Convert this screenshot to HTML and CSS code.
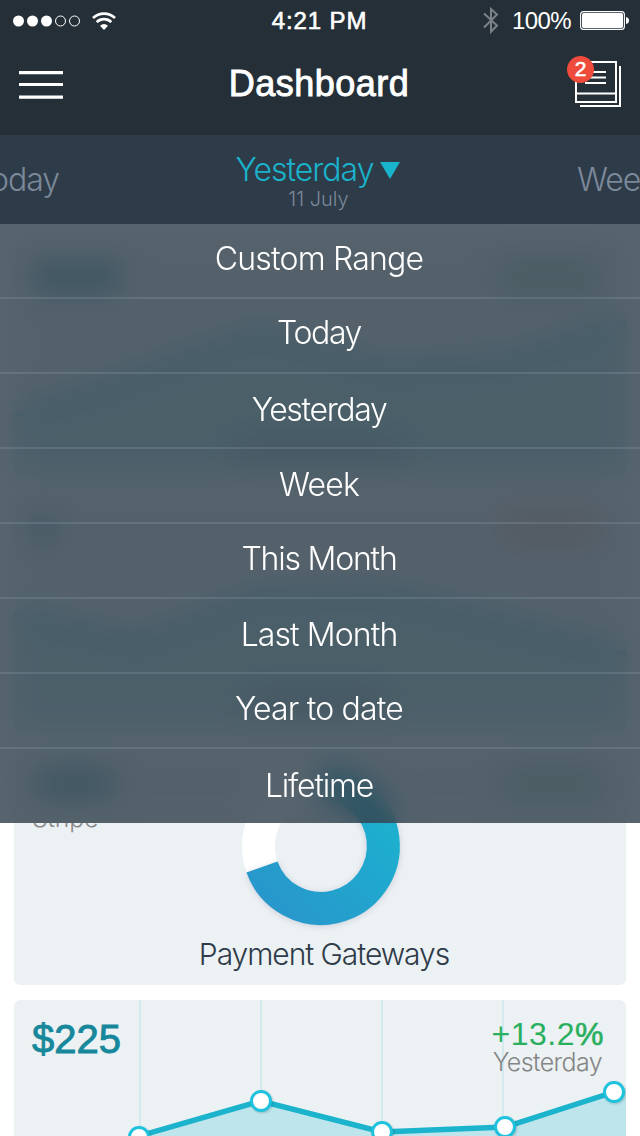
FILE: index.html
```
<!DOCTYPE html>
<html lang="en">
<head>
<meta charset="utf-8">
<title>Dashboard</title>
<link rel="stylesheet" href="styles.css">
</head>
<body>
<div class="screen">
  <div class="status">
    <div class="status-left">
      <svg class="signal" width="68" height="12" viewBox="0 0 68 12">
        <g fill="#fff"><circle cx="5.5" cy="6" r="5.5"/><circle cx="19.5" cy="6" r="5.5"/><circle cx="33.5" cy="6" r="5.5"/></g>
        <g fill="none" stroke="#fff"><circle cx="47.5" cy="6" r="5"/><circle cx="61.5" cy="6" r="5"/></g>
      </svg>
      <svg class="wifi" width="24" height="18" viewBox="0 0 24 18">
        <g fill="none" stroke="#fff" stroke-width="2.7"><path d="M1 6A16 16 0 0 1 23 6"/><path d="M4.7 10.1A10.5 10.5 0 0 1 19.300 10.100"/></g>
        <path d="M8 13.800Q12 10.200 16 13.800L12 18Z" fill="#fff"/>
      </svg>
    </div>
    <div class="time">4:21 PM</div>
    <div class="status-right">
      <svg class="bluetooth" width="16" height="27" viewBox="0 0 16 27"><path d="M1 6.500L14 18.500L8 24.800V2L14 7.500L1 20.500" fill="none" stroke="#7c8287" stroke-width="2"/></svg>
      <span class="percent">100%</span>
      <svg class="battery" width="50" height="19" viewBox="0 0 50 19"><rect x=".6" y=".6" width="43.800" height="17.800" rx="3" fill="none" stroke="#fff" stroke-width="1.100"/><rect x="2" y="2" width="41" height="15" rx="1.800" fill="#fff"/><path d="M46 6Q49 6.500 49 9.500T46 13Z" fill="#fff"/></svg>
    </div>
  </div>
  <header class="nav">
    <svg class="burger" width="44" height="28" viewBox="0 0 44 28"><path d="M0 1.700H44M0 13.500H44M0 26.200H44" stroke="#fff" stroke-width="3.200"/></svg>
    <h1 class="title">Dashboard</h1>
    <div class="inbox">
      <svg width="54" height="52" viewBox="0 0 54 52">
        <g fill="none" stroke="#fff" stroke-width="2"><path d="M9 6H49V46H9ZM9 37.500H49"/><path d="M53 10V50H13"/><path d="M18 16H39M18 21.500H39M18 27H39"/></g>
      </svg>
      <span class="badge">2</span>
    </div>
  </header>
  <nav class="range">
    <span class="prev">Today</span>
    <div class="current">
      <div class="current-row"><span class="current-name">Yesterday</span><svg width="20" height="17" viewBox="0 0 20 17"><path d="M0 0H20L10 17Z" fill="#1ab3cc"/></svg></div>
      <div class="current-date">11 July</div>
    </div>
    <span class="next">Week</span>
  </nav>
  <main class="cards">
    <section class="card">
      <svg class="chart" width="612" height="239" viewBox="0 0 612 239">
        <path class="area" d="M0 178L124 136L247 94L368 130L491 122L612 84V239H0Z"/>
        <path class="line" d="M0 178L124 136L247 94L368 130L491 122L612 84"/>
        <rect class="blob-teal" x="19" y="25" width="87" height="28" rx="4"/>
        <rect class="blob-green" x="482" y="20" width="106" height="40" rx="4"/>
        <rect class="blob-dark" x="215" y="203" width="180" height="16" rx="4"/>
      </svg>
    </section>
    <section class="card">
      <svg class="chart" width="612" height="239" viewBox="0 0 612 239">
        <path class="area" d="M0 122L124 149L247 103L368 100L491 130L612 162V239H0Z"/>
        <path class="line" d="M0 122L124 149L247 103L368 100L491 130L612 162"/>
        <rect class="blob-teal" x="19" y="23" width="20" height="28" rx="4"/>
        <rect class="blob-red" x="488" y="20" width="95" height="33" rx="4"/>
        <rect class="blob-dark" x="232" y="198" width="140" height="18" rx="4"/>
      </svg>
    </section>
    <section class="card">
      <svg class="chart" width="612" height="239" viewBox="0 0 612 239">
        <defs><linearGradient id="ring" x1="0" y1="1" x2="1" y2="0"><stop offset="0" stop-color="#2996cb"/><stop offset=".65" stop-color="#1fa9ce"/><stop offset="1" stop-color="#1db3ce"/></linearGradient></defs>
        <circle cx="307" cy="100" r="62.500" fill="none" stroke="#fff" stroke-width="33"/>
        <path class="ring" d="M307 37.500A62.500 62.500 0 1 1 248 121" fill="none" stroke="url(#ring)" stroke-width="33"/>
        <rect class="blob-teal" x="22" y="24" width="78" height="26" rx="4"/>
        <rect class="blob-green" x="486" y="20" width="104" height="36" rx="4"/>
      </svg>
      <div class="gateway">Stripe</div>
      <h2 class="card-title">Payment Gateways</h2>
    </section>
    <section class="card">
      <svg class="chart" width="612" height="239" viewBox="0 0 612 239">
        <path class="grid" d="M126 0V239M247 0V239M368 0V239M489 0V239"/>
        <path class="area" d="M0 180L125 136L247 101L368 132L491 127L600 92L612 88V239H0Z"/>
        <path class="line" d="M0 180L125 136L247 101L368 132L491 127L600 92"/>
        <g class="dots"><circle cx="125" cy="137" r="9.500"/><circle cx="247" cy="101" r="9.500"/><circle cx="368" cy="132" r="9.500"/><circle cx="491" cy="127" r="9.500"/><circle cx="600" cy="92" r="9.500"/></g>
      </svg>
      <div class="summary">
        <div class="amount">$225</div>
        <div class="delta"><div class="delta-value">+13.2<span class="pct">%</span></div><div class="delta-label">Yesterday</div></div>
      </div>
    </section>
  </main>
  <ul class="menu">
    <li class="w-custom">Custom Range</li>
    <li class="w-today">Today</li>
    <li class="w-yesterday">Yesterday</li>
    <li class="w-week">Week</li>
    <li class="w-this">This Month</li>
    <li class="w-last">Last Month</li>
    <li class="w-year">Year to date</li>
    <li class="w-life">Lifetime</li>
  </ul>
</div>
</body>
</html>
```
FILE: styles.css
```
* { box-sizing: border-box; }
body { margin: 0; background: #fff; font-family: Inter, "Liberation Sans", sans-serif; font-weight: 300; }
svg { display: block; flex: none; }
.screen { position: relative; width: 640px; height: 1136px; overflow: hidden; display: flex; flex-direction: column; background: #fff; }
.time, .title, .badge, .amount, .percent, .delta-value { font-family: "Liberation Sans", sans-serif; font-weight: 400; }
.status { height: 41px; flex: none; display: grid; grid-template-columns: 200px 240px 200px; align-items: center; background: #252f38; color: #fff; }
.status-left { display: flex; align-items: center; gap: 11px; padding-left: 13px; }
.time { text-align: center; font-size: 24px; line-height: 41px; letter-spacing: 0.9px; padding-right: 1px; -webkit-text-stroke: 0.6px #fff; }
.status-right { display: flex; align-items: center; justify-content: flex-end; padding-right: 10px; }
.percent { font-size: 24px; letter-spacing: -0.6px; line-height: 41px; margin: 0 9px 0 13px; }
.nav { height: 94px; flex: none; display: grid; grid-template-columns: 140px 360px 140px; background: #252f38; color: #fff; }
.burger { margin: 30px 0 0 19px; }
.title { margin: 0; text-align: center; font-size: 36px; line-height: 44px; padding: 21px 2px 0 0; letter-spacing: 0.5px; -webkit-text-stroke: 0.9px #fff; }
.inbox { position: relative; width: 54px; justify-self: end; margin: 15px 19px 0 0; }
.badge { position: absolute; left: 0; top: 0; width: 27px; height: 27px; border-radius: 50%; background: #ef4b3c; font-size: 21px; line-height: 26px; text-align: center; -webkit-text-stroke: 0.6px #fff; }
.range { height: 89px; flex: none; display: grid; grid-template-columns: 59px 1fr 63px; background: #2e3b48; overflow: hidden; color: #7b899a; font-size: 32px; letter-spacing: -1px; }
.prev { justify-self: end; padding-top: 26px; line-height: 38px; }
.next { padding-top: 26px; line-height: 38px; }
.current { display: flex; flex-direction: column; align-items: center; padding-top: 16px; }
.current-row { display: flex; align-items: center; gap: 7px; line-height: 38px; color: #1ab3cc; }
.current-date { font-size: 20px; line-height: 20px; letter-spacing: 0; padding-left: 1px; }
.cards { flex: none; display: grid; grid-auto-rows: 239px; gap: 15px; padding: 14px 14px 0; }
.card { display: grid; grid-template-columns: 612px; grid-template-rows: 239px; border-radius: 6px; overflow: hidden; background: #ecf1f4; }
.card > * { grid-area: 1 / 1; }
.area { fill: #bee5eb; }
.line { fill: none; stroke: #1cb4cd; stroke-width: 5.500; }
.grid { stroke: #d3ebef; stroke-width: 2; }
.dots circle { fill: #fff; stroke: #1fc2dd; stroke-width: 3; }
.dots { filter: drop-shadow(1px 1px 1px rgba(0, 60, 80, .25)); }
.ring { filter: drop-shadow(0 1px 3px rgba(80, 70, 120, .2)); }
.blob-teal { fill: #188599; opacity: .6; }
.blob-green { fill: #2a8f5e; opacity: .25; }
.blob-red { fill: #df3b3c; opacity: .22; }
.blob-dark { fill: #2e3b48; opacity: .3; }
.gateway { align-self: start; padding: 56px 0 0 18px; font-size: 25px; line-height: 32px; letter-spacing: -0.3px; color: #8a8a8a; clip-path: inset(77px 0 0 0); }
.card-title { align-self: start; margin: 0; padding: 190px 0 0 8px; width: 612px; text-align: center; font-size: 30px; font-weight: 300; line-height: 36px; letter-spacing: -1.050px; color: #2e3b48; }
.summary { display: flex; justify-content: space-between; padding: 0 22px 0 18px; }
.amount { padding-top: 15px; font-size: 40px; line-height: 48px; color: #17889b; -webkit-text-stroke: 0.9px #17889b; }
.delta { display: flex; flex-direction: column; align-items: flex-end; padding-top: 20px; }
.delta-value { font-size: 32px; line-height: 28px; letter-spacing: 0.500px; color: #2aaf5e; }
.pct { -webkit-text-stroke: 0.6px #2aaf5e; }
.delta-label { font-size: 25px; line-height: 28px; letter-spacing: -0.6px; padding-right: 2px; color: #858585; }
.menu { position: absolute; top: 224px; left: 0; width: 640px; height: 599px; margin: 0; padding: 0; list-style: none; background: rgba(46, 61, 73, .8); backdrop-filter: blur(15px); color: #fff; font-size: 32px; text-align: center; letter-spacing: -0.8px; }
.menu li { height: 75px; padding: 15px 2px 0 0; line-height: 40px; border-bottom: 2px solid rgba(160, 185, 195, .19); }
.menu .w-today { padding-top: 14px; letter-spacing: -1.400px; }
.menu .w-yesterday { padding-top: 16px; letter-spacing: -1.350px; }
.menu .w-week { padding-top: 16px; }
.menu .w-this { letter-spacing: -1.200px; }
.menu .w-last { padding-top: 16px; letter-spacing: -0.900px; }
.menu .w-life { height: 74px; padding-top: 17px; letter-spacing: -1.200px; border-bottom: 0; }
```
